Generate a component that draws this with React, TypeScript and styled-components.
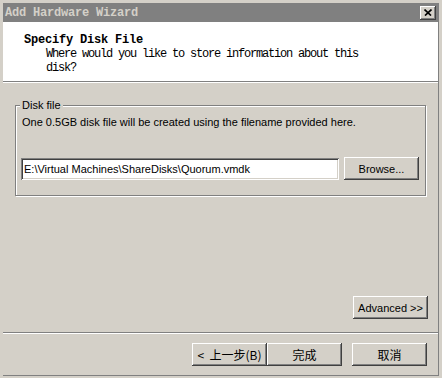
import React from "react";
import styled, { createGlobalStyle } from "styled-components";

const Global = createGlobalStyle`
  html, body { margin: 0; padding: 0; background: #d4d0c8; }
  * { box-sizing: border-box; }
`;

const Frame = styled.div`
  width: 442px;
  height: 378px;
  padding: 3px 3px 2px 3px;
  background: #d4d0c8;
  display: flex;
`;

const Window = styled.div`
  flex: 1;
  min-width: 0;
  display: flex;
  flex-direction: column;
  border-right: 1px solid #808080;
  border-bottom: 1px solid #808080;
`;

const TitleBar = styled.div`
  height: 19px;
  flex: none;
  background: #808080;
  display: flex;
  align-items: center;
  justify-content: space-between;
  padding: 0 2px 0 2px;
  font: bold 12px "Liberation Mono", monospace;
  letter-spacing: -0.2px;
  color: #d4d0c8;
`;

const CloseButton = styled.div`
  width: 16px;
  height: 14px;
  background: #d4d0c8;
  display: flex;
  align-items: center;
  justify-content: center;
  box-shadow: inset -1px -1px 0 #404040, inset 1px 1px 0 #fff,
    inset -2px -2px 0 #808080, inset 2px 2px 0 #d4d0c8;
`;

const Header = styled.div`
  height: 59px;
  flex: none;
  background: #fff;
  padding: 11px 0 0 21px;
  color: #000;
`;

const Heading = styled.div`
  font: bold 12px/14px "Liberation Mono", monospace;
  letter-spacing: -0.2px;
`;

const SubHeading = styled.div`
  margin-left: 22px;
  font: 12px/14px "Liberation Mono", monospace;
  letter-spacing: -1.2px;
`;

const Divider = styled.div`
  height: 2px;
  flex: none;
  border-top: 1px solid #808080;
  border-bottom: 1px solid #fff;
`;

const Body = styled.div`
  flex: none;
  display: flex;
  flex-direction: column;
  padding: 22px 12px 0 12px;
  font: 11px "Liberation Sans", Arial, sans-serif;
  color: #000;
`;

const GroupBox = styled.div`
  position: relative;
  height: 91px;
  border: 1px solid #808080;
  box-shadow: inset 1px 1px 0 #fff, 1px 1px 0 #fff;
  padding: 10px 5px 0 5px;
`;

const Legend = styled.div`
  position: absolute;
  top: -7px;
  left: 4px;
  padding: 0 2px;
  line-height: 13px;
  background: #d4d0c8;
`;

const Description = styled.div`
  line-height: 13px;
  margin-left: 1px;
`;

const FileRow = styled.div`
  display: flex;
  align-items: center;
  gap: 5px;
  margin-top: 28px;
`;

const PathInput = styled.input`
  width: 318px;
  height: 22px;
  border: none;
  outline: none;
  padding: 0 3px;
  margin: 0;
  background: #fff;
  font: 11px "Liberation Sans", Arial, sans-serif;
  color: #000;
  box-shadow: inset 1px 1px 0 #808080, inset -1px -1px 0 #fff,
    inset 2px 2px 0 #404040, inset -2px -2px 0 #d4d0c8;
`;

const Button = styled.button<{ $w?: number }>`
  width: ${(p) => p.$w ?? 75}px;
  height: 23px;
  flex: none;
  border: none;
  margin: 0;
  padding: 0;
  background: #d4d0c8;
  color: #000;
  font: 11px "Liberation Sans", "Noto Sans CJK SC", sans-serif;
  box-shadow: inset -1px -1px 0 #404040, inset 1px 1px 0 #fff,
    inset -2px -2px 0 #808080, inset 2px 2px 0 #d4d0c8;
`;

const CjkButton = styled(Button)`
  font: 12px "Noto Sans CJK SC", sans-serif;
`;

const AdvancedRow = styled.div`
  display: flex;
  justify-content: flex-end;
  margin-top: 100px;
  padding-right: 10px;
`;

const FooterDivider = styled(Divider)`
  margin-top: 13px;
`;

const Footer = styled.div`
  display: flex;
  justify-content: flex-end;
  gap: 10px;
  padding: 9px 11px 0 0;
`;

const Pair = styled.div`
  display: flex;
`;

export default function App() {
  return (
    <>
      <Global />
      <Frame>
        <Window>
          <TitleBar>
            <span>Add Hardware Wizard</span>
            <CloseButton>
              <svg width="8" height="7" viewBox="0 0 8 7">
                <path d="M0.5 0.5 L7 6.5 M7.5 0.5 L1 6.5" stroke="#000" strokeWidth="1.7" fill="none" />
              </svg>
            </CloseButton>
          </TitleBar>
          <Header>
            <Heading>Specify Disk File</Heading>
            <SubHeading>
              Where would you like to store information about this
              <br />
              disk?
            </SubHeading>
          </Header>
          <Divider />
          <Body>
            <GroupBox>
              <Legend>Disk file</Legend>
              <Description>
                One 0.5GB disk file will be created using the filename provided here.
              </Description>
              <FileRow>
                <PathInput readOnly value={"E:\\Virtual Machines\\ShareDisks\\Quorum.vmdk"} />
                <Button>Browse...</Button>
              </FileRow>
            </GroupBox>
          </Body>
          <AdvancedRow>
            <Button>Advanced &gt;&gt;</Button>
          </AdvancedRow>
          <FooterDivider />
          <Footer>
            <Pair>
              <CjkButton>{"<\u00a0\u00a0上一步(B)"}</CjkButton>
              <CjkButton>完成</CjkButton>
            </Pair>
            <CjkButton>取消</CjkButton>
          </Footer>
        </Window>
      </Frame>
    </>
  );
}
